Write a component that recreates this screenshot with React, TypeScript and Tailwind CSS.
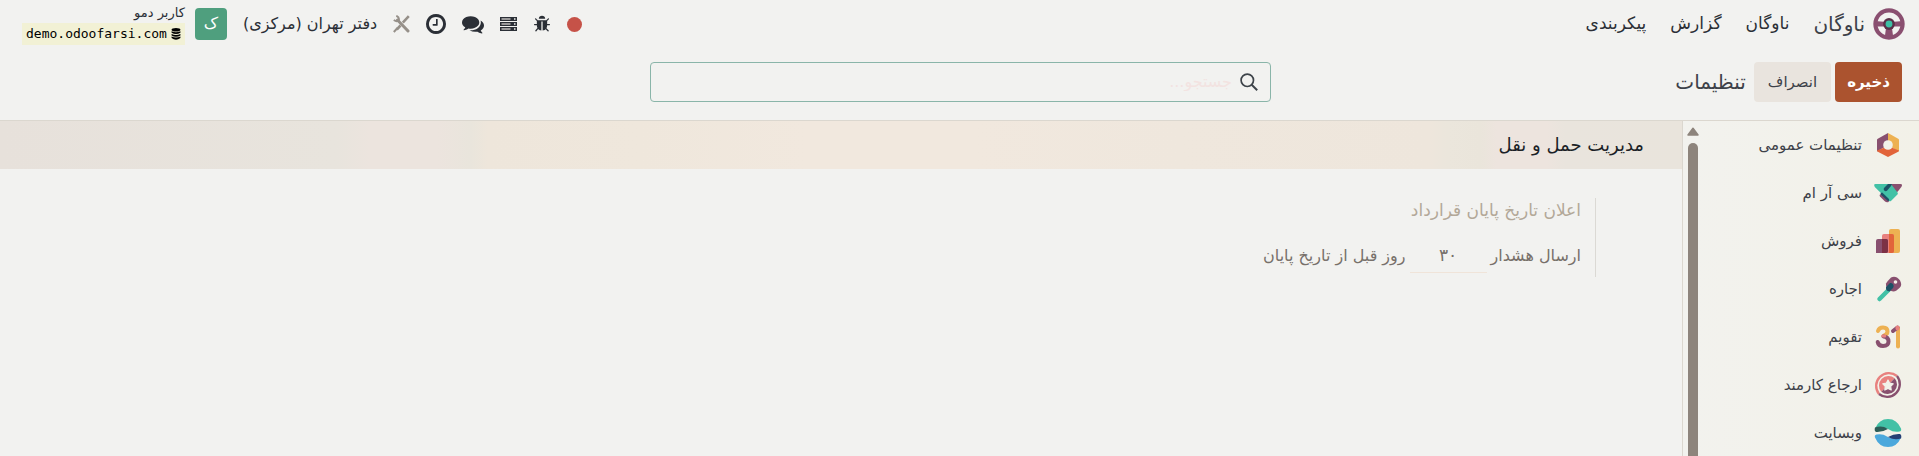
import type { ReactNode } from "react";

interface AppItem {
  label: string;
  icon: ReactNode;
}

const FleetLogo = () => (
  <svg viewBox="0 0 31 31" className="size-8 shrink-0">
    <circle cx="15.5" cy="15.5" r="13.2" fill="none" stroke="#8a4f70" strokeWidth="4" />
    <path
      d="M2 12.500 13 13.500h5l11-1v5.500L20 18l-1.500 2 1.200 9h-8.400l1.200-9L11 18 2 18z"
      fill="#8a4f70"
    />
    <circle cx="15.500" cy="15.500" r="5.700" fill="#5a3048" />
    <circle cx="15.500" cy="15.500" r="3.300" fill="#3dc0a5" />
  </svg>
);

const SettingsIcon = () => (
  <svg viewBox="0 0 28 28" className="size-7">
    <path d="M14 2v12L3 20.500V9q0-.8.800-1.300z" fill="#88506f" />
    <path d="M14 2l10.200 5.700q.8.500.800 1.300v11.500L14 14z" fill="#edb152" />
    <path d="M14 15l11 4.500q0 .9-.8 1.300L14 26 3.800 20.800q-.8-.4-.8-1.300z" fill="#e2643a" />
    <circle cx="14" cy="14" r="4.800" fill="#f2f1e9" />
  </svg>
);

const CrmIcon = () => (
  <svg viewBox="0 0 28 28" className="size-7">
    <path d="M5.500 16l3-2 7 7-1 2q-2 .8-4-1l-4.500-4.500z" fill="#88506f" />
    <path d="M13 5h13.500q2 0 1.300 2-.5 1.300-5 6.500L13 8z" fill="#88506f" />
    <path d="M1.500 5H17l6.500 8.500q.8 1-.3 2.200l-6 6q-1.200 1-2.500 0L.8 8Q-.8 5 1.500 5z" fill="#42c1a6" />
    <path d="M8.200 13.500l6.800 6.500q.8 1.600-.8 2.300l-7.700-7q-.3-1.800 1.700-1.800z" fill="#1c5266" />
    <path d="M10 9l4-4h4l-1 2-4 4.700q-1.600 1-2.800-.2-1-1.200-.2-2.500z" fill="#1c5266" />
  </svg>
);

const SalesIcon = () => (
  <svg viewBox="0 0 28 28" className="size-7">
    <path d="M15 26V4q0-2 2-2h7q2 0 2 2v20q0 2-2 2z" fill="#edb152" />
    <path d="M8 26V9q0-2 2-2h8q2 0 2 2v15q0 2-2 2z" fill="#e8817f" />
    <path d="M15 26V7h3q2 0 2 2v15q0 2-2 2z" fill="#e2643a" />
    <path d="M2 26V14q0-2 2-2h8q2 0 2 2v10q0 2-2 2z" fill="#88506f" />
    <path d="M8 26V12h4q2 0 2 2v10q0 2-2 2z" fill="#7c3145" />
  </svg>
);

const RentalIcon = () => (
  <svg viewBox="0 0 28 28" className="size-7">
    <path d="M5.500 24L16 13.500" stroke="#42c1a6" strokeWidth="4.500" strokeLinecap="round" />
    <path
      d="M17 2.500q3-1.500 6 0 4 2.500 4.200 7 0 2-1.500 3.300l-3.200 2.700q-3.500 2-7.500-.5-3.500-3-3-6.500 1-2 5-6z"
      fill="#88506f"
    />
    <path d="M12 12l4-4q2.500-.5 3.500 2 .5 1.500-.5 3l-3.500 3.500q-4-.5-3.500-4.500z" fill="#1c5266" />
    <circle cx="21.500" cy="7" r="1.800" fill="#f2f1e9" />
  </svg>
);

const CalendarIcon = () => (
  <svg viewBox="0 0 28 28" className="size-7" fill="none" strokeWidth="4" strokeLinecap="round">
    <path d="M4 8q1-3.500 5-3.500 4.500 0 4.500 4 0 3-4 4.300" stroke="#edb152" />
    <path d="M9.500 13.500q5 .5 5 5 0 4.500-5.500 4.500-4.500 0-5.300-4" stroke="#88506f" />
    <path d="M8.800 13h2" stroke="#e8817f" strokeWidth="3" />
    <path d="M24 5v18.500" stroke="#edb152" />
    <path d="M19 8l4.500-3.500" stroke="#88506f" />
    <path d="M23.500 4.500v1" stroke="#e8817f" />
  </svg>
);

const ReferralIcon = () => (
  <svg viewBox="0 0 28 28" className="size-7">
    <path d="M5 23A12.800 12.800 0 0 1 23 5" fill="none" stroke="#e8817f" strokeWidth="2.300" />
    <path d="M23 5A12.800 12.800 0 0 1 5 23" fill="none" stroke="#88506f" strokeWidth="2.300" />
    <path d="M7.300 20.700A9.500 9.500 0 0 1 20.700 7.300z" fill="#e8817f" />
    <path d="M20.700 7.300A9.500 9.500 0 0 1 7.300 20.700z" fill="#88506f" />
    <path
      d="M14 9l1.700 3.200 3.500.6-2.500 2.600.5 3.600-3.200-1.600-3.200 1.600.5-3.600-2.500-2.600 3.500-.6z"
      fill="#f2f1e9"
      stroke="#f2f1e9"
      strokeWidth="1.200"
      strokeLinejoin="round"
    />
  </svg>
);

const WebsiteIcon = () => (
  <svg viewBox="0 0 28 28" className="size-7">
    <path d="M1 9.500Q5 0 14 0t13 9.500q.8 2.500-1.500 3-6 1.200-10.500-2T1 9.500z" fill="#42c1a6" />
    <path d="M1 8.500q7-2.500 13 1.500-6 3.500-12 3-2-1-1-4.500z" fill="#2d5c57" />
    <path d="M27 18.500Q23 28 14 28T1 18.500q-.8-2.500 1.500-3 6-1.200 10.500 2t14 1z" fill="#4ba8dc" />
    <path d="M27 19.500q-7 2-13-1.500 6-3.500 12-3 2 1 1 4.500z" fill="#263f75" />
  </svg>
);

const BugIcon = () => (
  <svg viewBox="0 0 1792 1792" className="size-[18px]" fill="currentColor">
    <path d="M1696 960q0 26-19 45t-45 19h-224q0 171-67 290l208 209q19 19 19 45t-19 45q-18 19-45 19t-45-19l-198-197q-5 5-15 13t-42 28.500-65 36.500-82 29-97 13v-896h-128v896q-51 0-101.500-13.500t-87-33-66-39-43.500-32.500l-15-14-183 207q-20 21-48 21-24 0-43-16-19-18-20.500-44.500t15.500-46.500l202-227q-58-114-58-274h-224q-26 0-45-19t-19-45 19-45 45-19h224v-294l-173-173q-19-19-19-45t19-45 45-19 45 19l173 173h844l173-173q19-19 45-19t45 19 19 45-19 45l-173 173v294h224q26 0 45 19t19 45zm-480-576h-640q0-133 93.500-226.500t226.500-93.500 226.500 93.500 93.500 226.500z" />
  </svg>
);

const ServerIcon = () => (
  <svg viewBox="0 0 17 14" className="w-[17px] h-3.5">
    {[0, 5, 10].map((y) => (
      <g key={y}>
        <rect y={y} width="17" height="4" fill="currentColor" />
        <path d={`M1.500 ${y + 2}h9`} stroke="#c9c6c4" strokeWidth="1.400" />
        <path d={`M14 ${y + 2}h1.500`} stroke="#f2f2f0" strokeWidth="1.400" />
      </g>
    ))}
  </svg>
);

const CommentsIcon = () => (
  <svg viewBox="0 0 1792 1792" className="size-[22px]" fill="currentColor">
    <path d="M1408 768q0 139-94 257t-256.500 186.500-353.500 68.500q-86 0-176-16-124 88-278 128-36 9-86 16h-3q-11 0-20.500-8t-11.500-21q-1-3-1-6.500t.5-6.500 2-6l2.500-5 3.500-5.500 4-5 4.500-5 4-4.500q5-6 23-25t26-29.500 22.500-29 25-38.500 20.500-44q-124-72-195-177t-71-224q0-139 94-257t256.500-186.500 353.500-68.500 353.500 68.500 256.500 186.500 94 257zm384 256q0 120-71 224.500t-195 176.500q10 24 20.500 44t25 38.500 22.500 29 26 29.500 23 25q1 1 4 4.500t4.500 5 4 5 3.500 5.500l2.500 5 2 6 .5 6.500-1 6.500q-3 14-13 22t-22 7q-50-7-86-16-154-40-278-128-90 16-176 16-271 0-472-132 58 4 88 4 161 0 309-45t264-129q125-92 192-212t67-254q0-77-23-152 129 71 204 178t75 230z" />
  </svg>
);

const ClockIcon = () => (
  <svg viewBox="128 128 1536 1536" className="size-5" fill="currentColor">
    <path d="M1024 544v448q0 14-9 23t-23 9h-320q-14 0-23-9t-9-23v-64q0-14 9-23t23-9h224v-352q0-14 9-23t23-9h64q14 0 23 9t9 23zm416 352q0-148-73-273t-198-198-273-73-273 73-198 198-73 273 73 273 198 198 273 73 273-73 198-198 73-273zm224 0q0 209-103 385.500t-279.500 279.500-385.500 103-385.500-103-279.500-279.500-103-385.500 103-385.500 279.500-279.500 385.500-103 385.500 103 279.500 279.500 103 385.500z" />
  </svg>
);

const ToolsIcon = () => (
  <svg viewBox="0 0 17 18" className="w-[17px] h-[18px]" fill="none" stroke="#969089">
    <path d="M15.800 1.200L9.800 7.600M7.500 10.500l-3.700 4" strokeWidth="2.600" />
    <path d="M4.500 13l-3.700 4" strokeWidth="2" />
    <path d="M4.500 5l10.500 11" strokeWidth="3" strokeLinecap="round" />
    <path d="M3.300.8Q6.500 2 5.800 5.200 4 7.200.8 5" strokeWidth="2" />
  </svg>
);

const DatabaseIcon = () => (
  <svg viewBox="0 0 10 13" className="w-2.5 h-3" fill="currentColor">
    <ellipse cx="5" cy="2" rx="4.800" ry="1.900" />
    <path d="M.2 3.500q4.800 2.200 9.600 0v1.600q-4.800 3-9.600 0z" />
    <path d="M.2 6.400q4.800 2.200 9.600 0V8q-4.800 3-9.600 0z" />
    <path d="M.2 9.300q4.800 2.200 9.600 0v1.600q-4.800 3.600-9.600 0z" />
  </svg>
);

const SearchIcon = () => (
  <svg viewBox="0 0 18 18" className="size-[18px]" fill="none" stroke="#3d4349" strokeWidth="1.700">
    <circle cx="7.300" cy="7.300" r="6.200" />
    <path d="M11.700 11.700l5.500 5.500" strokeWidth="2" />
  </svg>
);

const menus = ["ناوگان", "گزارش", "پیکربندی"];

const apps: AppItem[] = [
  { label: "تنظیمات عمومی", icon: <SettingsIcon /> },
  { label: "سی آر ام", icon: <CrmIcon /> },
  { label: "فروش", icon: <SalesIcon /> },
  { label: "اجاره", icon: <RentalIcon /> },
  { label: "تقویم", icon: <CalendarIcon /> },
  { label: "ارجاع کارمند", icon: <ReferralIcon /> },
  { label: "وبسایت", icon: <WebsiteIcon /> },
];

const Navbar = () => (
  <header className="flex h-12 items-center justify-between pr-3.5 pl-[22px] text-[#2b2f36]">
    <nav className="flex items-center gap-6 text-[17px]">
      <a href="#" className="flex items-center gap-2 text-xl text-[#3d4149]">
        <FleetLogo />
        ناوگان
      </a>
      {menus.map((menu) => (
        <a key={menu} href="#">
          {menu}
        </a>
      ))}
    </nav>

    <div className="flex items-center">
      <div className="flex items-center gap-4">
        <button type="button" aria-label="ضبط" className="size-[15px] rounded-full bg-[#c65248]" />
        <button type="button" aria-label="اشکال‌زدایی">
          <BugIcon />
        </button>
        <button type="button" aria-label="سرور">
          <ServerIcon />
        </button>
        <button type="button" aria-label="گفتگو">
          <CommentsIcon />
        </button>
        <button type="button" aria-label="فعالیت‌ها">
          <ClockIcon />
        </button>
        <button type="button" aria-label="ابزار">
          <ToolsIcon />
        </button>
        <button type="button" className="text-base">
          دفتر تهران (مرکزی)
        </button>
      </div>
      <button type="button" className="mr-4 flex items-center gap-2.5">
        <span className="flex size-8 items-center justify-center rounded bg-[#4f9f7e] text-base text-white">
          ک
        </span>
        <span className="flex flex-col items-start">
          <span className="text-[13px] leading-5">کاربر دمو</span>
          <span
            dir="ltr"
            className="flex items-center gap-1 bg-[#f2f1d5] px-1 font-['DejaVu_Sans_Mono',monospace] text-[13px] leading-[22px] text-black"
          >
            demo.odoofarsi.com
            <DatabaseIcon />
          </span>
        </span>
      </button>
    </div>
  </header>
);

const ControlPanel = () => (
  <div className="grid h-[73px] grid-cols-[1fr_621px_1fr] items-start border-b border-[#dbd7cf] pt-3.5 pr-[17px] pl-[19px]">
    <div className="flex h-10 items-center gap-1">
      <button type="button" className="h-10 rounded bg-[#ab532f] px-3 text-[15px] font-bold text-white">
        ذخیره
      </button>
      <button type="button" className="h-10 rounded bg-[#e9e4de] px-3.5 text-[15px] text-[#3d4149]">
        انصراف
      </button>
      <h1 className="mr-1 text-xl text-[#3d4149]">تنظیمات</h1>
    </div>
    <label className="flex h-10 items-center gap-2 rounded border border-[#8ab5a9] px-3">
      <SearchIcon />
      <input
        type="text"
        aria-label="جستجو"
        placeholder="جستجو..."
        className="min-w-0 flex-1 bg-transparent text-base outline-none placeholder:text-[#f3e3e1]"
      />
    </label>
  </div>
);

const Sidebar = () => (
  <aside className="flex w-[237px] shrink-0 border-l border-[#dbd7cf] bg-linear-to-l from-[#f2f1e8] to-[#f2f2ee]">
    <ul className="flex-1">
      {apps.map((app) => (
        <li key={app.label}>
          <a href="#" className="flex h-12 items-center gap-3 pr-[17px] text-[15px] text-[#3d4149]">
            {app.icon}
            {app.label}
          </a>
        </li>
      ))}
    </ul>
    {/* Scrollbar */}
    <div className="ml-1 flex w-3 flex-col items-center gap-[7px] pt-1.5">
      <svg viewBox="0 0 12 9" className="h-[9px] w-3 shrink-0">
        <path d="M6 1.300L11 8H1z" fill="#8d847c" stroke="#8d847c" strokeWidth="1.500" strokeLinejoin="round" />
      </svg>
      <div className="w-2.5 flex-1 rounded-t-full bg-[#8d847c]" />
    </div>
  </aside>
);

const FleetSettings = () => (
  <main className="flex-1">
    <h2 className="flex h-12 items-center bg-[linear-gradient(to_left,#e9e4dc_0%,#e9e4dd_7%,#ede4de_8%,#ede4de_11%,#eae5db_12%,#ebe6dc_14%,#eee6dc_15%,#efe7dd_30%,#f1e8de_42%,#f1e8de_52%,#efe7dc_62%,#eee6db_71%,#e9e5dc_72%,#ece4de_74%,#ece4de_78%,#e8e4dd_80%,#e7e1db_100%)] pr-[38px] text-lg font-medium text-[#1b1f27]">
      مدیریت حمل و نقل
    </h2>
    <section className="mt-[29px] mr-[86px] border-r border-[#dbd9d4] pr-3.5 text-base">
      <h3 className="text-[17px] leading-6 text-[#b3a898]">اعلان تاریخ پایان قرارداد</h3>
      <label className="mt-3 flex h-[43px] items-center gap-1 text-[#77706a]">
        ارسال هشدار
        <input
          type="text"
          defaultValue="۳۰"
          className="h-[34px] w-[77px] border-b border-[#f0e4d9] bg-transparent text-center text-[17px] outline-none"
        />
        روز قبل از تاریخ پایان
      </label>
    </section>
  </main>
);

const App = () => {
  return (
    <div
      dir="rtl"
      lang="fa"
      className="flex h-screen flex-col overflow-hidden bg-[#f2f2f0] font-['DejaVu_Sans',sans-serif]"
    >
      <Navbar />
      <ControlPanel />
      <div className="flex min-h-0 flex-1 overflow-hidden">
        <Sidebar />
        <FleetSettings />
      </div>
    </div>
  );
};

export default App;
